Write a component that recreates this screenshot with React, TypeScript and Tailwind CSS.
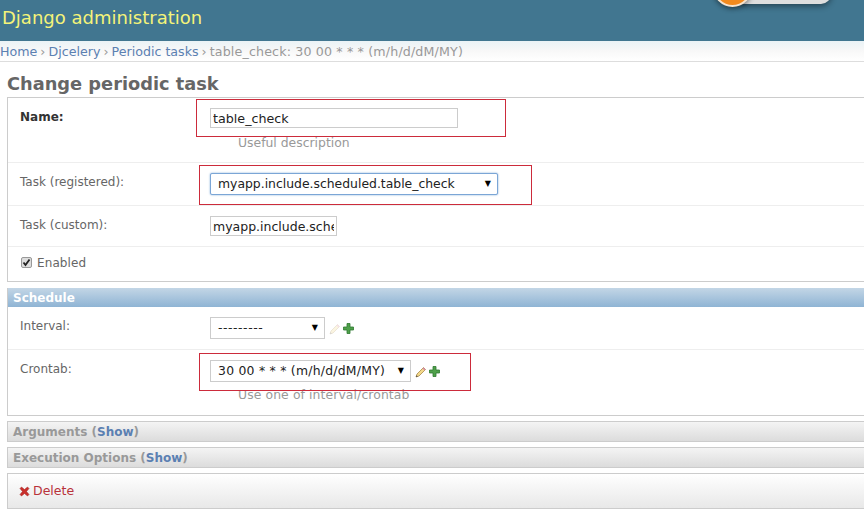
const font = "font-['DejaVu_Sans',sans-serif]";

function Pencil({ faded = false }: { faded?: boolean }) {
  return (
    <svg width="12" height="12" viewBox="0 0 12 12" className={faded ? 'opacity-25' : ''}>
      <path d="M1 11 L2 8 L8.5 1.5 L10.5 3.5 L4 10 Z" fill="#f3d98a" stroke="#a8894a" strokeWidth="0.8" />
      <path d="M8.5 1.5 L10.5 3.5 L9.5 4.5 L7.5 2.5 Z" fill="#d98aa8" />
      <path d="M1 11 L1.6 9.2 L2.8 10.4 Z" fill="#444" />
    </svg>
  );
}

function Plus() {
  return (
    <svg width="11" height="11" viewBox="0 0 11 11">
      <path d="M4 .5 H7 V4 H10.5 V7 H7 V10.5 H4 V7 H.5 V4 H4 Z" fill="#4fa04a" stroke="#2f7a30" strokeWidth="0.8" />
    </svg>
  );
}

function FakeSelect({ value, width, focused = false, spacing = '' }: { value: string; width: string; focused?: boolean; spacing?: string }) {
  return (
    <div
      className={`${width} flex items-center justify-between bg-white text-[12.4px] text-[#222] pl-[7px] pr-[6px] ${
        focused ? 'h-[22px] border border-[#7ba6d6] rounded-[2px] shadow-[0_0_2px_#7ba6d6]' : 'h-[22px] border border-[#ccc]'
      }`}
    >
      <span className={`whitespace-nowrap ${spacing}`}>{value}</span>
      <span className="text-[8px] text-black">▼</span>
    </div>
  );
}

function Annotation({ className }: { className: string }) {
  return <div className={`absolute border border-[#cc2b3b] pointer-events-none ${className}`} />;
}

function CollapsedBar({ title }: { title: string }) {
  return (
    <div className="h-[21px] mb-[5px] border border-r-0 border-[#ccc] bg-gradient-to-b from-[#f4f4f4] to-[#dcdcdc] pl-[5px] text-[12px] font-bold text-[#999] leading-[20px]">
      {title} (<span className="text-[#5b80b2]">Show</span>)
    </div>
  );
}

function Crumb({ children }: { children: string }) {
  return (
    <>
      <span className="text-[#5b80b2]">{children}</span>
      <span className="mx-[-1px]"> › </span>
    </>
  );
}

export default function App() {
  return (
    <div className={`${font} relative w-[864px] h-[510px] overflow-hidden bg-white text-[12px] text-[#666]`}>
      {/* header */}
      <div className="relative h-[41px] bg-[#417690]">
        <div className="pl-[2px] pt-[6px] text-[18px] leading-[24px] text-[#f4f379]">Django administration</div>
        <div className="absolute left-[740px] top-[-20px] w-[91px] h-[24px] rounded-r-[10px] bg-[#dedede] shadow-[0_2px_6px_rgba(0,0,0,0.45)]" />
        <div className="absolute left-[713px] top-[-32px] w-[39px] h-[39px] rounded-full bg-[#f28a1e] border-2 border-[#f6e4cf] shadow-[0_2px_5px_rgba(0,0,0,0.45)]" />
      </div>

      {/* breadcrumbs */}
      <div className="h-[21px] border-b border-[#ddd] bg-gradient-to-b from-[#eaf3f6] via-[#f8f8f8] to-white leading-[21px] text-[12.65px] text-[#999] whitespace-nowrap">
        <Crumb>Home</Crumb>
        <Crumb>Djcelery</Crumb>
        <Crumb>Periodic tasks</Crumb>
        <span className="tracking-[0.15px]">table_check: 30 00 * * * (m/h/d/dM/MY)</span>
      </div>

      <div className="pl-[7px]">
        <h1 className="h-[35px] pt-[10px] text-[17.8px] leading-[24px] font-bold text-[#666]">Change periodic task</h1>

        {/* main fieldset */}
        <div className="relative border border-r-0 border-[#ccc] w-[900px]">
          <div className="h-[65px] border-b border-[#eee] pl-[12px] pt-[10px] flex">
            <label className="w-[190px] mt-[1px] font-bold text-[#333] leading-[16px]">Name:</label>
            <div>
              <input
                readOnly
                defaultValue="table_check"
                className="block w-[248px] h-[20px] border border-[#ccc] pl-[2px] pr-[2px] text-[12.7px] text-[#222] outline-none"
              />
              <p className="pl-[28px] pt-[8px] text-[12.4px] leading-[14px] text-[#999]">Useful description</p>
            </div>
          </div>
          <div className="h-[43px] border-b border-[#eee] pl-[12px] pt-[10px] flex">
            <label className="w-[190px] mt-[1px] leading-[16px]">Task (registered):</label>
            <FakeSelect value="myapp.include.scheduled.table_check" width="w-[288px]" focused />
          </div>
          <div className="h-[41px] border-b border-[#eee] pl-[12px] pt-[10px] flex">
            <label className="w-[190px] mt-[1px] leading-[16px]">Task (custom):</label>
            <input
              readOnly
              defaultValue="myapp.include.scheduled.table_check"
              className="block w-[127px] h-[20px] border border-[#ccc] px-[2px] text-[12.5px] text-[#222] outline-none"
            />
          </div>
          <div className="h-[34px] pl-[13px] pt-[8px] flex items-start gap-[5px] leading-[16px] tracking-[0.1px]">
            <span className="mt-[2px] w-[11px] h-[11px] border border-[#999] rounded-[2px] bg-[#ddd] flex items-center justify-center">
              <svg width="9" height="9" viewBox="0 0 9 9">
                <path d="M1.5 4.5 L3.5 7 L7.5 1.5" fill="none" stroke="#222" strokeWidth="1.8" />
              </svg>
            </span>
            Enabled
          </div>
          <Annotation className="left-[188px] top-[1px] w-[310px] h-[38px]" />
          <Annotation className="left-[191px] top-[67px] w-[333px] h-[40px]" />
        </div>

        {/* schedule */}
        <div className="relative mt-[6px] border border-r-0 border-t-0 border-[#ccc] w-[900px]">
          <div className="h-[19px] bg-gradient-to-b from-[#c3d6e6] to-[#8fb4d4] pl-[5px] text-[12px] font-bold text-white leading-[20px]">
            Schedule
          </div>
          <div className="h-[43px] border-b border-[#eee] pl-[12px] pt-[10px] flex">
            <label className="w-[190px] mt-[1px] leading-[16px]">Interval:</label>
            <FakeSelect value="---------" width="w-[115px]" spacing="tracking-[0.55px]" />
            <span className="ml-[4px] mt-[6px] flex gap-[2px]">
              <Pencil faded />
              <Plus />
            </span>
          </div>
          <div className="h-[65px] pl-[12px] pt-[10px]">
            <div className="flex">
              <label className="w-[190px] mt-[1px] leading-[16px]">Crontab:</label>
              <FakeSelect value="30 00 * * * (m/h/d/dM/MY)" width="w-[201px]" spacing="tracking-[0.25px]" />
              <span className="ml-[4px] mt-[6px] flex gap-[2px]">
                <Pencil />
                <Plus />
              </span>
            </div>
            <p className="pl-[218px] pt-[6px] text-[12.4px] tracking-[0.1px] leading-[14px] text-[#999]">Use one of interval/crontab</p>
          </div>
          <Annotation className="left-[191px] top-[65px] w-[272px] h-[38px]" />
        </div>

        <div className="mt-[5px] w-[900px]">
          <CollapsedBar title="Arguments" />
          <CollapsedBar title="Execution Options" />
        </div>

        {/* delete row */}
        <div className="h-[36px] w-[900px] border border-r-0 border-[#ccc] bg-gradient-to-b from-white to-[#e8e8e8] pl-[11px] pt-[1px] flex items-center gap-[3px] text-[12.5px] text-[#b8323a]">
          <svg width="11" height="11" viewBox="0 0 11 11">
            <path d="M1 2.5 L2.5 1 L5.5 3.5 L8.5 1 L10 2.5 L7.5 5.5 L10 8.5 L8.5 10 L5.5 7.5 L2.5 10 L1 8.5 L3.5 5.5 Z" fill="#c9302c" stroke="#a01f1f" strokeWidth="0.5" />
          </svg>
          Delete
        </div>
      </div>
    </div>
  );
}
